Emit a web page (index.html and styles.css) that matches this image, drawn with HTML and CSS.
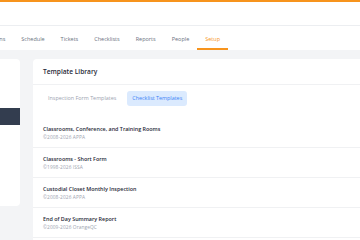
FILE: index.html
```html
<!DOCTYPE html>
<html lang="en">
<head>
    <meta charset="UTF-8">
    <meta name="viewport" content="width=device-width, initial-scale=1.0">
    <title>Setup - Template Library</title>
    <link rel="stylesheet" href="styles.css">
</head>
<body>
    <header class="topbar"></header>

    <nav class="main-nav">
        <a href="#" class="nav-item">Inspections</a>
        <a href="#" class="nav-item">Schedule</a>
        <a href="#" class="nav-item">Tickets</a>
        <a href="#" class="nav-item">Checklists</a>
        <a href="#" class="nav-item">Reports</a>
        <a href="#" class="nav-item">People</a>
        <a href="#" class="nav-item active">Setup</a>
    </nav>

    <main class="page">
        <aside class="side-card">
            <div class="side-item"></div>
            <div class="side-item"></div>
            <div class="side-item selected"></div>
        </aside>

        <section class="library">
            <div class="library-header">Template Library</div>
            <div class="library-tabs">
                <button class="tab">Inspection Form Templates</button>
                <button class="tab active">Checklist Templates</button>
            </div>
            <ul class="template-list">
                <li class="template">
                    <div class="template-name">Classrooms, Conference, and Training Rooms</div>
                    <div class="template-source">©2008-2026 APPA</div>
                </li>
                <li class="template">
                    <div class="template-name">Classrooms - Short Form</div>
                    <div class="template-source">©1998-2026 ISSA</div>
                </li>
                <li class="template">
                    <div class="template-name">Custodial Closet Monthly Inspection</div>
                    <div class="template-source">©2008-2026 APPA</div>
                </li>
                <li class="template">
                    <div class="template-name">End of Day Summary Report</div>
                    <div class="template-source">©2009-2026 OrangeQC</div>
                </li>
            </ul>
        </section>
    </main>
</body>
</html>
```

FILE: styles.css
```css
body {
    font-family: "Open Sans", "Liberation Sans", sans-serif;
    background-color: #f3f4f6;
    margin: 0;
    padding: 0;
    overflow: hidden;
}
.topbar {
    height: 26px;
    background-color: #fff;
    border-top: 2px solid #f7941d;
    border-bottom: 1px solid #eceef1;
    box-sizing: border-box;
}
.main-nav {
    display: flex;
    background-color: #fff;
    margin-left: -32px;
    height: 24px;
    box-sizing: border-box;
}
.nav-item {
    padding: 10px 8px 0;
    font-size: 5.5px;
    line-height: 7px;
    color: #6b7280;
    text-decoration: none;
    border-bottom: 2px solid transparent;
}
.nav-item.active {
    color: #f7941d;
    border-bottom-color: #f7941d;
}
.page {
    display: flex;
    gap: 13px;
    padding-top: 9px;
}
.side-card {
    width: 20px;
    height: 147px;
    background-color: #fff;
    border-radius: 0 4px 4px 0;
    padding-top: 31px;
    box-sizing: border-box;
    flex-shrink: 0;
}
.side-item {
    height: 6px;
}
.side-item.selected {
    height: 17px;
    margin-top: 6px;
    background-color: #333d4f;
}
.library {
    flex: 1;
    background-color: #fff;
    border-radius: 4px 0 0 0;
    min-height: 200px;
}
.library-header {
    padding: 9px 10px 0;
    height: 26px;
    box-sizing: border-box;
    font-size: 6.6px;
    line-height: 8px;
    font-weight: 600;
    color: #1f2937;
    border-bottom: 1px solid #f0f1f3;
}
.library-tabs {
    display: flex;
    gap: 6px;
    padding: 6px 10px 12px;
}
.tab {
    font-family: inherit;
    font-size: 5.4px;
    line-height: 7px;
    padding: 4px 5px;
    border: none;
    border-radius: 3px;
    background: none;
    color: #9ca3af;
}
.tab.active {
    background-color: #dbeafe;
    color: #3b82f6;
}
.template-list {
    list-style: none;
    margin: 0;
    padding: 0;
}
.template {
    padding: 7px 10px 6px;
    border-bottom: 1px solid #f0f1f3;
}
.template-name {
    font-size: 5.4px;
    line-height: 8px;
    font-weight: 600;
    color: #1f2937;
}
.template-source {
    margin-top: 1px;
    font-size: 4.8px;
    line-height: 7px;
    letter-spacing: 0.1px;
    color: #9ca3af;
}
```
